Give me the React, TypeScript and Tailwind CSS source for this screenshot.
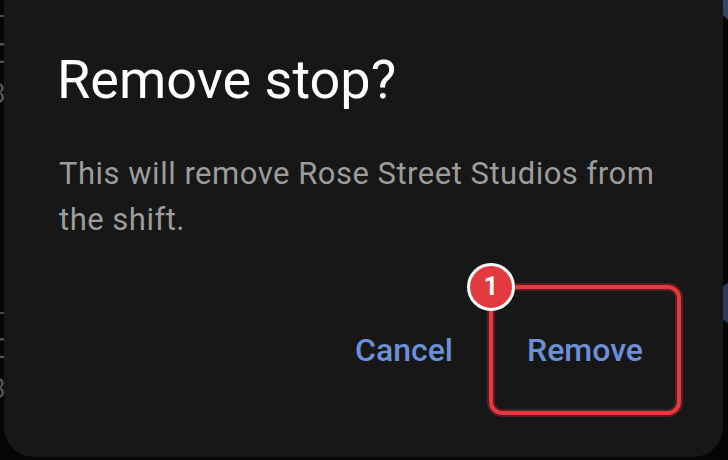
import React from "react";

const App = () => {
  return (
    <div className="relative w-[728px] h-[460px] overflow-hidden bg-[#050505] font-['Roboto',sans-serif]">
      {/* contenido detras del dialogo */}
      <div className="absolute left-0 top-[15px] w-[6px] h-[2px] bg-[#4a4a4a]" />
      <span className="absolute left-[-8px] top-[40px] text-[28px] leading-none text-[#555]">C</span>
      <span className="absolute left-[-10px] top-[80px] text-[28px] leading-none text-[#555]">3</span>
      <span className="absolute left-[-8px] top-[240px] text-[28px] leading-none text-[#555]">!</span>
      <div className="absolute left-0 top-[312px] w-[6px] h-[2px] bg-[#4a4a4a]" />
      <span className="absolute left-[-8px] top-[335px] text-[28px] leading-none text-[#555]">C</span>
      <span className="absolute left-[-10px] top-[375px] text-[28px] leading-none text-[#555]">3</span>
      <div className="absolute left-[716px] top-[-30px] size-[54px] rounded-full bg-[#34456a]" />
      <div className="absolute left-[716px] top-[280px] size-[46px] rounded-full bg-[#2c3b5c]" />

      {/* dialogo */}
      <div className="relative ml-[4px] mt-[-30px] w-[719px] h-[487px] rounded-[30px] bg-[#171717] pl-[53px] pt-[78px] flex flex-col">
        <h2 className="text-[54px] leading-[64px] text-white">Remove stop?</h2>
        <p className="mt-[39px] pl-[2px] pr-[40px] text-[31px] leading-[46px] tracking-[0.5px] text-[#9c9c9c]">
          This will remove Rose Street Studios from the shift.
        </p>

        <div className="mt-auto mb-[42px] flex items-center justify-end gap-[36px] pr-[42px]">
          <button className="text-[32px] font-medium text-[#6c90d8]">Cancel</button>
          <div className="relative">
            <button className="w-[192px] h-[130px] rounded-[13px] border-[4px] border-[#e23a40] shadow-[0_0_0_2px_#5a1c1f,inset_0_0_0_2px_#5a1c1f] text-[32px] font-medium text-[#6c90d8]">
              Remove
            </button>
            <div className="absolute left-[-22px] top-[-22px] size-[48px] rounded-full border-[3px] border-white bg-[#e23a40] flex items-center justify-center text-[25px] font-bold text-white">
              1
            </div>
          </div>
        </div>
      </div>
    </div>
  );
};

export default App;
